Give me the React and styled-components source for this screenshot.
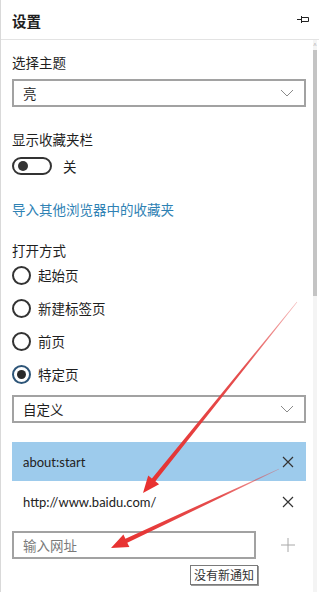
import React from "react";
import styled, { createGlobalStyle } from "styled-components";

const Global = createGlobalStyle`
  html, body { margin: 0; padding: 0; background: #fff; }
  body { font-family: "Noto Sans CJK SC", sans-serif; color: #1f1f1f; }
`;

const Frame = styled.div`
  position: relative;
  width: 319px;
  height: 592px;
  box-sizing: border-box;
  border-left: 1px solid #d9d9d9;
  overflow: hidden;
  display: flex;
  flex-direction: column;
`;

const Header = styled.div`
  height: 39px;
  flex: none;
  display: flex;
  align-items: center;
  justify-content: space-between;
  padding: 0 9px 0 11px;
  border-bottom: 1px solid #e3e3e3;
`;

const Title = styled.div`
  font-family: "Noto Sans CJK SC", sans-serif;
  font-weight: 700;
  font-size: 14.5px;
  margin-top: 1px;
`;

const Body = styled.div`
  flex: 1;
  display: flex;
  min-height: 0;
`;

const Content = styled.div`
  flex: 1;
  padding: 12px 7px 0 11px;
  display: flex;
  flex-direction: column;
`;

const Scrollbar = styled.div`
  width: 6px;
  flex: none;
  display: flex;
  flex-direction: column;
  align-items: flex-start;
  background: linear-gradient(to right, #f4f4f4 0 4px, #fff 4px);
`;

const ScrollArrow = styled.div`
  height: 10px;
  font-size: 7px;
  line-height: 10px;
  color: #b5b5b5;
`;

const Thumb = styled.div`
  width: 4px;
  height: 246px;
  background: #c4c4c4;
`;

const Label = styled.div`
  font-family: "Noto Sans CJK SC", sans-serif;
  font-size: 13.5px;
  line-height: 20px;
  margin-top: ${(p) => p.$mt || 0}px;
`;

const Select = styled.div`
  box-sizing: border-box;
  height: 28px;
  margin-top: ${(p) => p.$mt || 0}px;
  border: 2px solid #a2a2a2;
  display: flex;
  align-items: center;
  justify-content: space-between;
  padding: 0 10px 0 9px;
  font-family: "Noto Sans CJK SC", sans-serif;
  font-size: 13.5px;
`;

const ToggleRow = styled.div`
  display: flex;
  align-items: center;
  gap: 11px;
  margin-top: 8px;
  height: 18px;
  font-family: "Noto Sans CJK SC", sans-serif;
  font-size: 13.5px;
`;

const Toggle = styled.div`
  box-sizing: border-box;
  width: 40px;
  height: 18px;
  border: 2px solid #333;
  border-radius: 9px;
  display: flex;
  align-items: center;
  padding-left: 4px;
`;

const Knob = styled.div`
  width: 10px;
  height: 10px;
  border-radius: 50%;
  background: #333;
`;

const Link = styled.div`
  font-family: "Noto Sans CJK SC", sans-serif;
  font-size: 13.5px;
  line-height: 20px;
  color: #2f82b4;
  margin-top: 24px;
`;

const RadioGroup = styled.div`
  display: flex;
  flex-direction: column;
  gap: 13px;
  margin-top: 5px;
`;

const RadioRow = styled.div`
  display: flex;
  align-items: center;
  gap: 7px;
  height: 20px;
  font-family: "Noto Sans CJK SC", sans-serif;
  font-size: 13.5px;
`;

const RadioCircle = styled.div`
  box-sizing: border-box;
  width: 19px;
  height: 19px;
  border-radius: 50%;
  border: 2px solid ${(p) => (p.$on ? "#2d5578" : "#333")};
  display: flex;
  align-items: center;
  justify-content: center;
`;

const RadioDot = styled.div`
  width: 9px;
  height: 9px;
  border-radius: 50%;
  background: #2a2a2a;
`;

const UrlList = styled.div`
  margin-top: 19px;
  display: flex;
  flex-direction: column;
`;

const UrlRow = styled.div`
  height: ${(p) => (p.$sel ? 39 : 41)}px;
  display: flex;
  align-items: center;
  justify-content: space-between;
  padding: 0 12px 0 11px;
  background: ${(p) => (p.$sel ? "#9dcbec" : "transparent")};
  font-family: Lato, "Noto Sans CJK SC", sans-serif;
  font-size: 13px;
  color: #222;
`;

const AddRow = styled.div`
  display: flex;
  align-items: center;
  margin-top: 9px;
`;

const Input = styled.div`
  box-sizing: border-box;
  width: 244px;
  height: 28px;
  border: 2px solid #a2a2a2;
  display: flex;
  align-items: center;
  padding-left: 9px;
  font-family: "Noto Sans CJK SC", sans-serif;
  font-size: 13.5px;
  color: #7a7a7a;
`;

const PlusWrap = styled.div`
  margin-left: 25px;
  display: flex;
`;

const Tooltip = styled.div`
  position: absolute;
  left: 189px;
  top: 565px;
  padding: 0 3px;
  height: 18px;
  line-height: 17px;
  border: 1px solid #7a7a7a;
  background: #fff;
  box-shadow: 1px 1px 0 #9a9a9a;
  font-family: "Noto Sans CJK SC", sans-serif;
  font-size: 12px;
  color: #333;
`;

const Overlay = styled.svg`
  position: absolute;
  left: 0;
  top: 0;
  pointer-events: none;
`;

const Chevron = () => (
  <svg width="14" height="8" viewBox="0 0 14 8">
    <path d="M1 1 L7 7 L13 1" fill="none" stroke="#8a8a8a" strokeWidth="1" />
  </svg>
);

const Close = () => (
  <svg width="12" height="12" viewBox="0 0 12 12">
    <path d="M1 1 L11 11 M11 1 L1 11" stroke="#333" strokeWidth="1.2" />
  </svg>
);

const Plus = () => (
  <svg width="14" height="14" viewBox="0 0 14 14">
    <path d="M7 0 V14 M0 7 H14" stroke="#a8a8a8" strokeWidth="1" />
  </svg>
);

const Pin = () => (
  <svg width="13" height="9" viewBox="0 0 13 9">
    <path d="M0 4.5 H4 M4.5 1 V8 M4.5 2.5 H11.5 V6.5 H4.5" fill="none" stroke="#222" strokeWidth="1" />
  </svg>
);

function arrowPoints(sx, sy, tx, ty, headLen, headW, shaftW) {
  const dx = tx - sx, dy = ty - sy;
  const len = Math.hypot(dx, dy);
  const ux = dx / len, uy = dy / len;
  const nx = -uy, ny = ux;
  const bx = tx - ux * headLen, by = ty - uy * headLen;
  const pts = [
    [sx + nx * 0.3, sy + ny * 0.3],
    [bx + nx * shaftW / 2, by + ny * shaftW / 2],
    [bx + nx * headW / 2, by + ny * headW / 2],
    [tx, ty],
    [bx - nx * headW / 2, by - ny * headW / 2],
    [bx - nx * shaftW / 2, by - ny * shaftW / 2],
    [sx - nx * 0.3, sy - ny * 0.3],
  ];
  return pts.map((p) => p.map((v) => v.toFixed(1)).join(",")).join(" ");
}

const Arrows = () => (
  <Overlay width="319" height="592" viewBox="0 0 319 592">
    <defs>
      <linearGradient id="g1" x1="296" y1="302" x2="142" y2="493" gradientUnits="userSpaceOnUse">
        <stop offset="0" stopColor="#e23b3b" stopOpacity="0.35" />
        <stop offset="0.35" stopColor="#e23b3b" stopOpacity="0.9" />
        <stop offset="1" stopColor="#e8302f" />
      </linearGradient>
      <linearGradient id="g2" x1="278" y1="469" x2="110" y2="548" gradientUnits="userSpaceOnUse">
        <stop offset="0" stopColor="#e23b3b" stopOpacity="0.35" />
        <stop offset="0.35" stopColor="#e23b3b" stopOpacity="0.9" />
        <stop offset="1" stopColor="#e8302f" />
      </linearGradient>
    </defs>
    <polygon points={arrowPoints(296, 302, 142, 493, 17, 14, 4.5)} fill="url(#g1)" />
    <polygon points={arrowPoints(278, 469, 110, 548, 17, 14, 4.5)} fill="url(#g2)" />
  </Overlay>
);

const radios = ["起始页", "新建标签页", "前页", "特定页"];

export default function App() {
  return (
    <>
      <Global />
      <Frame>
        <Header>
          <Title>设置</Title>
          <Pin />
        </Header>
        <Body>
          <Content>
            <Label>选择主题</Label>
            <Select $mt={7}>
              <span>亮</span>
              <Chevron />
            </Select>
            <Label $mt={22}>显示收藏夹栏</Label>
            <ToggleRow>
              <Toggle>
                <Knob />
              </Toggle>
              <span>关</span>
            </ToggleRow>
            <Link>导入其他浏览器中的收藏夹</Link>
            <Label $mt={21}>打开方式</Label>
            <RadioGroup>
              {radios.map((r, i) => (
                <RadioRow key={r}>
                  <RadioCircle $on={i === 3}>{i === 3 && <RadioDot />}</RadioCircle>
                  <span>{r}</span>
                </RadioRow>
              ))}
            </RadioGroup>
            <Select $mt={11}>
              <span>自定义</span>
              <Chevron />
            </Select>
            <UrlList>
              <UrlRow $sel>
                <span>about:start</span>
                <Close />
              </UrlRow>
              <UrlRow>
                <span>http://www.baidu.com/</span>
                <Close />
              </UrlRow>
            </UrlList>
            <AddRow>
              <Input>输入网址</Input>
              <PlusWrap>
                <Plus />
              </PlusWrap>
            </AddRow>
          </Content>
          <Scrollbar>
            <ScrollArrow>^</ScrollArrow>
            <Thumb />
          </Scrollbar>
        </Body>
        <Tooltip>没有新通知</Tooltip>
        <Arrows />
      </Frame>
    </>
  );
}
